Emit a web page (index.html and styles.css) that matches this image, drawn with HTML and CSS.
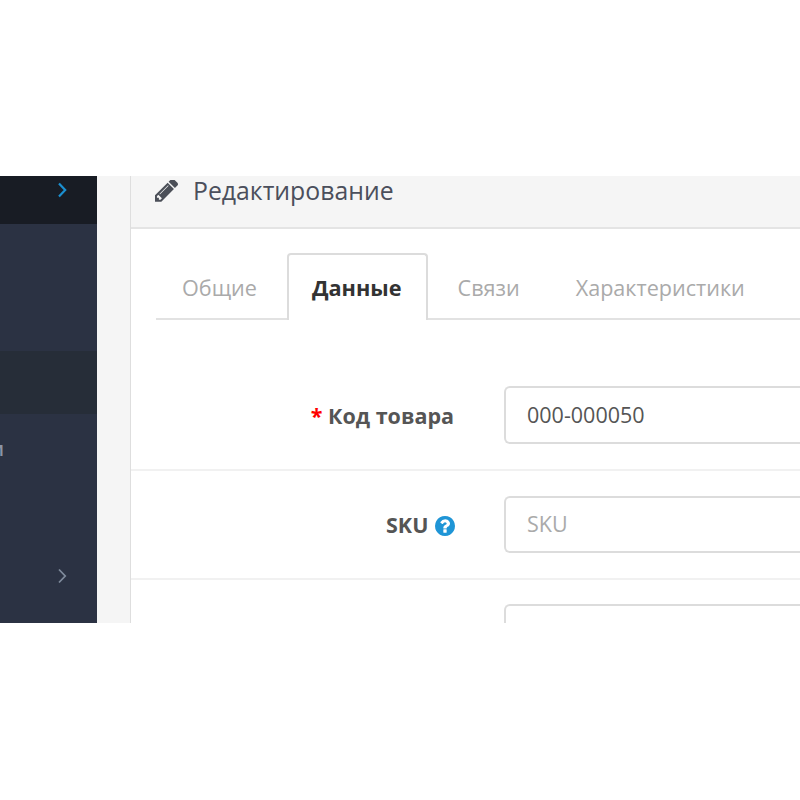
FILE: index.html
```html
<!DOCTYPE html>
<html lang="ru">
<head>
<meta charset="utf-8">
<title>Редактирование</title>
<link rel="stylesheet" href="styles.css">
</head>
<body>
<div class="stage">
  <aside class="sidebar">
    <div class="side-top">
      <svg class="chev" viewBox="0 0 10 16"><path d="M2 1.5 8.2 8 2 14.5" fill="none" stroke="#1b8fd0" stroke-width="2.2"/></svg>
    </div>
    <div class="side-gap-a"></div>
    <div class="side-active"></div>
    <div class="side-text"><span>м</span></div>
    <div class="side-arrow">
      <svg class="chev" viewBox="0 0 10 16"><path d="M2 1.5 8.2 8 2 14.5" fill="none" stroke="#7f8b9c" stroke-width="1.8"/></svg>
    </div>
  </aside>
  <main class="content">
    <section class="panel">
      <header class="panel-head">
        <svg class="pencil" viewBox="128 256 1515 1408"><path fill="#4b4f58" d="M491 1536l91-91-235-235-91 91v107h128v128h107zm523-928q0-22-22-22-10 0-17 7l-542 542q-7 7-7 17 0 22 22 22 10 0 17-7l542-542q7-7 7-17zm-54-192l416 416-832 832h-416v-416zm683 96q0 53-37 90l-166 166-416-416 166-165q36-38 90-38 53 0 91 38l235 234q37 39 37 91z"/></svg>
        <h1 class="panel-title">Редактирование</h1>
      </header>
      <div class="panel-body">
        <nav class="tabs">
          <a class="tab">Общие</a>
          <a class="tab active">Данные</a>
          <a class="tab">Связи</a>
          <a class="tab">Характеристики</a>
        </nav>
        <div class="form">
          <div class="row row-first">
            <label class="label"><span class="req">*</span> Код товара</label>
            <input class="field" value="000-000050">
          </div>
          <div class="row row-second">
            <label class="label">SKU
              <svg class="help" viewBox="128 128 1536 1536"><path fill="#1f95d6" d="M1024 1376v-192q0-14-9-23t-23-9h-192q-14 0-23 9t-9 23v192q0 14 9 23t23 9h192q14 0 23-9t9-23zm256-672q0-88-55.5-163t-138.5-116-170-41q-243 0-371 213-15 24 8 42l132 100q7 6 19 6 16 0 25-12 53-68 86-92 34-24 86-24 48 0 85.5 26t37.5 59q0 38-20 61t-68 45q-63 28-115.5 86.5t-52.5 125.5v36q0 14 9 23t23 9h192q14 0 23-9t9-23q0-19 21.5-49.5t54.5-49.5q32-18 49-28.5t46-35 44.5-48 28-60.5 12.5-81zm384 192q0 209-103 385.5t-279.5 279.5-385.5 103-385.5-103-279.5-279.5-103-385.5 103-385.5 279.5-279.5 385.5-103 385.5 103 279.5 279.5 103 385.5z"/></svg>
            </label>
            <input class="field" placeholder="SKU">
          </div>
          <div class="row row-last">
            <label class="label"></label>
            <input class="field">
          </div>
        </div>
      </div>
    </section>
  </main>
</div>
</body>
</html>
```
FILE: styles.css
```css
* { box-sizing: border-box; }
html, body { margin: 0; padding: 0; background: #fff; }
body { padding-top: 176px; height: 800px; overflow: hidden; font-family: "Open Sans", sans-serif; }

.stage { display: flex; height: 447px; overflow: hidden; background: #f5f5f5; }

.sidebar { width: 97px; flex: none; background: #2b3243; display: flex; flex-direction: column; }
.side-top { height: 48px; flex: none; background: #181c24; display: flex; justify-content: flex-end; padding: 6px 30px 0 0; }
.chev { width: 10px; height: 16px; display: block; }
.side-gap-a { height: 127px; flex: none; }
.side-active { height: 63px; flex: none; background: #262d38; }
.side-text { height: 24px; flex: none; margin-top: 23px; display: flex; justify-content: flex-end; width: 4px; overflow: hidden; color: #8a95a5; font-size: 20px; font-weight: 600; line-height: 24px; }
.side-text span { flex: none; }
.side-arrow { display: flex; justify-content: flex-end; padding: 107px 30px 0 0; }

.content { flex: 1; min-width: 0; padding-left: 33px; }
.panel { width: 100%; height: 100%; background: #fff; border-left: 1px solid #dedede; }
.panel-head { height: 53px; background: #f5f5f5; border-bottom: 2px solid #e4e4e4; display: flex; align-items: flex-start; padding: 4px 0 0 24px; gap: 15px; }
.pencil { width: 23px; height: 22px; flex: none; }
.panel-title { margin: -1px 0 0; font-size: 24.8px; line-height: 23px; font-weight: 400; color: #4b4f5c; }

.panel-body { padding: 24px 0 0 25px; }
.tabs { display: flex; gap: 4px; height: 67px; border-bottom: 2px solid #e2e2e2; }
.tab { height: 67px; padding: 18px 25px 0; font-size: 21.6px; line-height: 32px; color: #aaa; border: 1px solid transparent; border-bottom: 0; }
.tab.active { font-size: 21.7px; font-weight: 700; color: #333; background: #fff; border-color: #dcdcdc; border-width: 2px 2px 0; padding: 17px 24px 0 23px; border-radius: 4px 4px 0 0; }

.form { margin-left: -25px; }
.row { display: flex; align-items: flex-start; border-bottom: 2px solid #f1f1f1; }
.row-first { height: 151px; padding-top: 66px; }
.row-first .label { padding: 1px 0 0; }
.row-second { height: 109px; padding-top: 25px; }
.row-second .field { height: 57px; }
.row-second .label { line-height: 57px; width: 322px; margin-right: 0; }
.row-last { border-bottom: 0; padding-top: 24px; }
.label { width: 323px; flex: none; text-align: right; font-size: 21.5px; line-height: 58px; font-weight: 700; color: #555; display: block; white-space: nowrap; margin-right: -1px; }
.req { color: #f00; }
.help { width: 20px; height: 20px; vertical-align: -3px; margin-left: 1px; margin-right: -2px; }
.field { margin-left: 51px; flex: 1; min-width: 0; height: 58px; border: 2px solid #dcdcdc; border-right: 0; border-radius: 6px 0 0 6px; padding: 0 21px 2px; font: 400 21.5px "Open Sans", sans-serif; color: #555; background: #fff; outline: 0; }
.field::placeholder { color: #aaa; opacity: 1; }
```
